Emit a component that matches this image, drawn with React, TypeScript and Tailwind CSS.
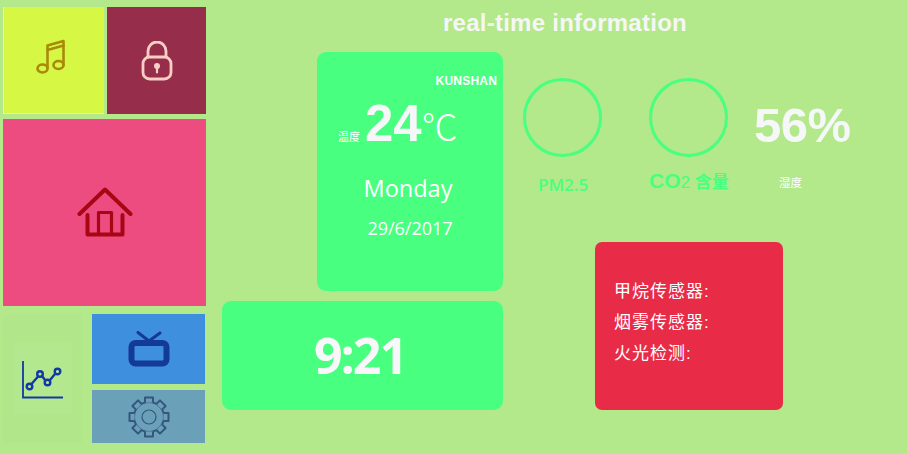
const sans = "font-['Liberation_Sans','Noto_Sans_CJK_SC',sans-serif]";

function Music() {
  return (
    <svg width="30" height="36" viewBox="0 0 30 36" fill="none" stroke="#a88a08" strokeWidth="2.6" strokeLinecap="round" strokeLinejoin="round">
      <ellipse cx="6.500" cy="29.500" rx="5" ry="4" />
      <ellipse cx="22.500" cy="26" rx="5" ry="4" />
      <path d="M11.500 29V6.500L27.500 2v24" />
      <path d="M11.500 11L27.500 6.500" />
    </svg>
  );
}
function Lock() {
  return (
    <svg width="32" height="40" viewBox="0 0 32 40" fill="none" stroke="#f7cfc4" strokeWidth="2.8" strokeLinecap="round">
      <rect x="2" y="16" width="28" height="22" rx="6.500" />
      <path d="M7 16v-6a9 9 0 0 1 18 0v6" />
      <circle cx="16" cy="25" r="3" fill="#f7cfc4" stroke="none" />
      <path d="M16 26v5.500" strokeWidth="2.200" />
    </svg>
  );
}
function Home() {
  return (
    <svg width="56" height="50" viewBox="0 0 56 50" fill="none" stroke="#a80612" strokeWidth="4" strokeLinecap="round" strokeLinejoin="round">
      <path d="M2.500 27L28 2.500 53.500 27" />
      <path d="M10.500 28v19.500h35V28" />
      <path d="M21.500 46V25.500h13V46" strokeWidth="3.200" />
    </svg>
  );
}
function Chart() {
  return (
    <svg width="42" height="38" viewBox="0 0 42 38" fill="none" stroke="#1238a8" strokeWidth="2.400">
      <path d="M1 0v36.500h40" strokeWidth="1.800" />
      <path d="M9.500 23l7-8M20 15l3 4M28 19l5-6" />
      <circle cx="7.500" cy="25.500" r="2.800" />
      <circle cx="18" cy="13" r="2.800" />
      <circle cx="25.500" cy="21.500" r="2.800" />
      <circle cx="35.500" cy="10.500" r="2.800" />
    </svg>
  );
}
function Tv() {
  return (
    <svg width="42" height="36" viewBox="0 0 42 36" fill="none" stroke="#123a96" strokeLinecap="round" strokeLinejoin="round">
      <path d="M10 1.500l11 8.500 11-8" strokeWidth="3" />
      <rect x="3.500" y="12" width="35" height="20.500" rx="4" strokeWidth="6" />
    </svg>
  );
}
function Gear() {
  const teeth = [0, 45, 90, 135, 180, 225, 270, 315];
  return (
    <svg width="44" height="44" viewBox="0 0 44 44" fill="none" stroke="#35577e" strokeWidth="2">
      <circle cx="22" cy="22" r="7" strokeWidth="1.200" />
      <circle cx="22" cy="22" r="15" />
      {teeth.map((a) => (
        <path key={a} d="M18 7.600V2.500h8v5.100" fill="#6aa0b8" strokeLinejoin="round" transform={`rotate(${a} 22 22)`} />
      ))}
    </svg>
  );
}

export default function App() {
  return (
    <div className={`w-[907px] h-[454px] overflow-hidden bg-[#b3e88b] flex ${sans}`}>
      <aside className="w-[207px] shrink-0 pl-[3px] pt-[7px] flex flex-col">
        <div className="flex gap-[3px] h-[107px]">
          <div className="w-[101px] bg-[#d6f744] border-l border-b border-[#e6f9b8] flex items-center justify-center pr-[7px] pb-[7px]">
            <Music />
          </div>
          <div className="w-[99px] bg-[#952d4b] flex items-center justify-center">
            <Lock />
          </div>
        </div>
        <div className="mt-[5px] w-[203px] h-[187px] bg-[#ec4c80] flex items-center justify-center pb-[2px]">
          <Home />
        </div>
        <div className="mt-[8px] flex gap-[10px]">
          <div className="w-[79px] h-[129px] bg-[#b1e68a] flex items-center justify-center">
            <div className="w-[58px] h-[71px] bg-[#b4e88e] flex items-center justify-center pt-[2px]">
              <Chart />
            </div>
          </div>
          <div className="w-[113px] flex flex-col gap-[6px]">
            <div className="h-[70px] bg-[#3f8fdf] flex items-center justify-center">
              <Tv />
            </div>
            <div className="h-[53px] bg-[#6aa0b8] flex items-center justify-center">
              <Gear />
            </div>
          </div>
        </div>
      </aside>

      <main className="flex-1 flex flex-col">
        <h1 className="h-[52px] pb-[6px] pl-[236px] flex items-center text-[24px] leading-none font-bold tracking-[0.25px] text-[#f6f7f5]">
          real-time information
        </h1>
        <div className="flex">
          <div className="w-[296px] shrink-0 pl-[15px] flex flex-col items-end gap-[10px]">
            <section className="w-[186px] h-[239px] rounded-[9px] bg-[#48ff7f] text-white flex flex-col">
              <div className="pt-[22px] pr-[6px] text-right text-[12px] leading-[14px] font-bold tracking-[0.2px]">KUNSHAN</div>
              <div className="mt-[12px] pl-[21px] flex items-baseline h-[48px]">
                <span className="text-[11px] w-[27px]">温度</span>
                <span className="text-[51px] leading-[48px] font-bold text-[#f6f7f9]">24</span>
                <span className="text-[36px] leading-[48px] font-['Noto_Sans_CJK_SC',sans-serif] font-light">℃</span>
              </div>
              <div className="mt-[23px] pr-[4px] text-center text-[23.5px] leading-[34px] font-['Open_Sans',sans-serif]">Monday</div>
              <div className="mt-[11px] text-center text-[18px] leading-[24px] font-['Open_Sans',sans-serif]">29/6/2017</div>
            </section>
            <section className="w-[281px] h-[109px] rounded-[9px] bg-[#48ff7f] flex items-center justify-center pb-[2px] pr-[5px]">
              <span className="text-[50px] leading-none font-bold tracking-[-2px] text-[#f8f8fb] font-['Open_Sans',sans-serif]">9:21</span>
            </section>
          </div>

          <div className="flex-1 flex flex-col">
            <div className="pt-[26px] pl-[20px] flex">
              <div className="w-[126px] flex flex-col">
                <div className="w-[79px] h-[79px] rounded-full border-[3px] border-[#48ff7f]" />
                <div className="mt-[17px] pl-[15px] text-[17px] leading-[22px] text-[#48ff7f] font-['Open_Sans',sans-serif] font-semibold">PM2.5</div>
              </div>
              <div className="w-[105px] flex flex-col">
                <div className="w-[79px] h-[79px] rounded-full border-[3px] border-[#48ff7f]" />
                <div className="mt-[13px] text-[#48ff7f] leading-[22px] font-bold whitespace-nowrap">
                  <span className="text-[21px]">CO</span>
                  <span className="text-[17px] font-normal">2 </span>
                  <span className="text-[17px]">含量</span>
                </div>
              </div>
              <div className="flex flex-col">
                <div className="mt-[20px] text-[49px] leading-[54px] font-bold text-[#f6f7f9] whitespace-nowrap tracking-[-0.5px]">56%</div>
                <div className="mt-[24px] pl-[25px] text-[11.5px] leading-[14px] text-white">湿度</div>
              </div>
            </div>
            <section className="mt-[46px] ml-[92px] w-[188px] h-[168px] rounded-[7px] bg-[#e82c47] pt-[34px] pl-[19px] text-white text-[17px] leading-[31px] tracking-[1px]">
              <div>甲烷传感器:</div>
              <div>烟雾传感器:</div>
              <div>火光检测:</div>
            </section>
          </div>
        </div>
      </main>
    </div>
  );
}
